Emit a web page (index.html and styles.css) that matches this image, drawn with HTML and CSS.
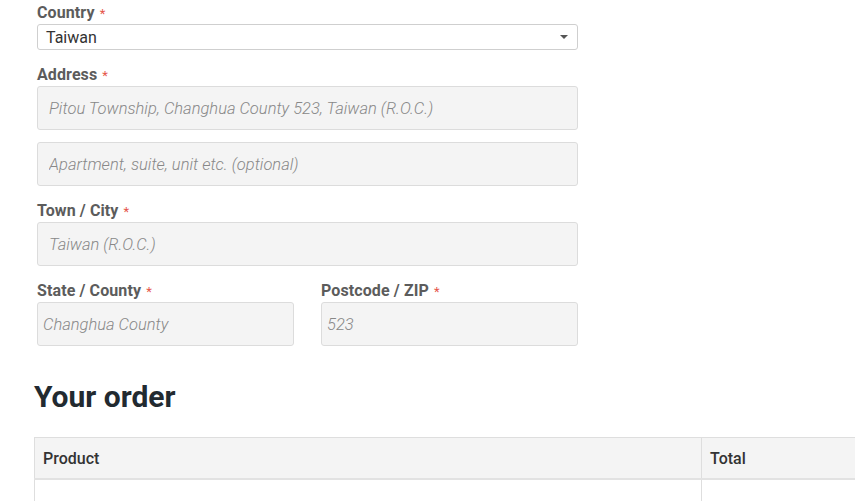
FILE: index.html
```html
<!DOCTYPE html>
<html lang="en">
<head>
    <meta charset="UTF-8">
    <meta name="viewport" content="width=device-width, initial-scale=1.0">
    <title>Checkout</title>
    <link rel="stylesheet" href="styles.css">
</head>
<body>
    <main class="checkout">
        <form class="billing">
            <div class="campo">
                <label>Country <span class="obrigatorio">*</span></label>
                <div class="select">
                    <span>Taiwan</span>
                    <span class="seta"></span>
                </div>
            </div>
            <div class="campo">
                <label>Address <span class="obrigatorio">*</span></label>
                <input type="text" class="entrada" placeholder="Pitou Township, Changhua County 523, Taiwan (R.O.C.)">
                <input type="text" class="entrada" placeholder="Apartment, suite, unit etc. (optional)">
            </div>
            <div class="campo">
                <label>Town / City <span class="obrigatorio">*</span></label>
                <input type="text" class="entrada" placeholder="Taiwan (R.O.C.)">
            </div>
            <div class="linha">
                <div class="campo">
                    <label>State / County <span class="obrigatorio">*</span></label>
                    <input type="text" class="entrada curta" placeholder="Changhua County">
                </div>
                <div class="campo">
                    <label>Postcode / ZIP <span class="obrigatorio">*</span></label>
                    <input type="text" class="entrada curta" placeholder="523">
                </div>
            </div>
        </form>

        <h2 class="titulo">Your order</h2>
        <table class="pedido">
            <thead>
                <tr>
                    <th class="col-produto">Product</th>
                    <th class="col-total">Total</th>
                </tr>
            </thead>
            <tbody>
                <tr>
                    <td></td>
                    <td></td>
                </tr>
            </tbody>
        </table>
    </main>
</body>
</html>
```

FILE: styles.css
```css
body, html{
    margin: 0;
    padding: 0;
    background-color: white;
    font-family: Roboto, "Liberation Sans", sans-serif;
    overflow: hidden;
}
.checkout{
    padding-left: 34px;
}
.billing{
    width: 541px;
    margin-left: 3px;
    display: flex;
    flex-direction: column;
    gap: 12px;
}
.campo{
    display: flex;
    flex-direction: column;
    gap: 12px;
}
.campo label{
    display: block;
    height: 22px;
    padding-top: 2px;
    line-height: 22px;
    margin-bottom: -12px;
    font-size: 16px;
    font-weight: 700;
    color: #5c5c5c;
    letter-spacing: 0.1px;
}
.obrigatorio{
    color: #e5554a;
    font-size: 13px;
    font-weight: 400;
    margin-left: 1px;
}
.select{
    height: 26px;
    box-sizing: border-box;
    border: 1px solid #cfcfcf;
    border-radius: 3px;
    padding: 0 8px;
    display: flex;
    align-items: center;
    justify-content: space-between;
    font-size: 16px;
    color: #333;
}
.seta{
    width: 0;
    height: 0;
    border-left: 4px solid transparent;
    border-right: 4px solid transparent;
    border-top: 4px solid #555;
    margin-right: 1px;
}
.entrada{
    height: 44px;
    box-sizing: border-box;
    width: 100%;
    border: 1px solid #dcdcdc;
    border-radius: 3px;
    background-color: #f4f4f4;
    padding: 0 11px;
    font-family: Roboto, "Liberation Sans", sans-serif;
    font-size: 16.5px;
    font-style: italic;
    font-weight: 300;
    outline: none;
}
.entrada::placeholder{
    color: #888;
}
.entrada.curta{
    padding: 0 5px;
}
.linha{
    display: grid;
    grid-template-columns: 257px 257px;
    column-gap: 27px;
}
.titulo{
    margin: 31px 0 0 0;
    height: 40px;
    line-height: 40px;
    font-size: 30px;
    font-weight: 700;
    color: #222a30;
}
.pedido{
    margin-top: 20px;
    width: 821px;
    border-collapse: collapse;
    border: 1px solid #dedede;
    border-right: 0;
}
.pedido th{
    text-align: left;
    height: 40px;
    padding: 0 8px;
    font-size: 16px;
    font-weight: 500;
    color: #333;
    background-color: #f4f4f4;
    border-bottom: 2px solid #e2e2e2;
}
.col-produto{
    width: 650px;
}
.col-total{
    border-left: 1px solid #dedede;
}
.pedido td{
    height: 40px;
}
.pedido td + td{
    border-left: 1px solid #dedede;
}
```
